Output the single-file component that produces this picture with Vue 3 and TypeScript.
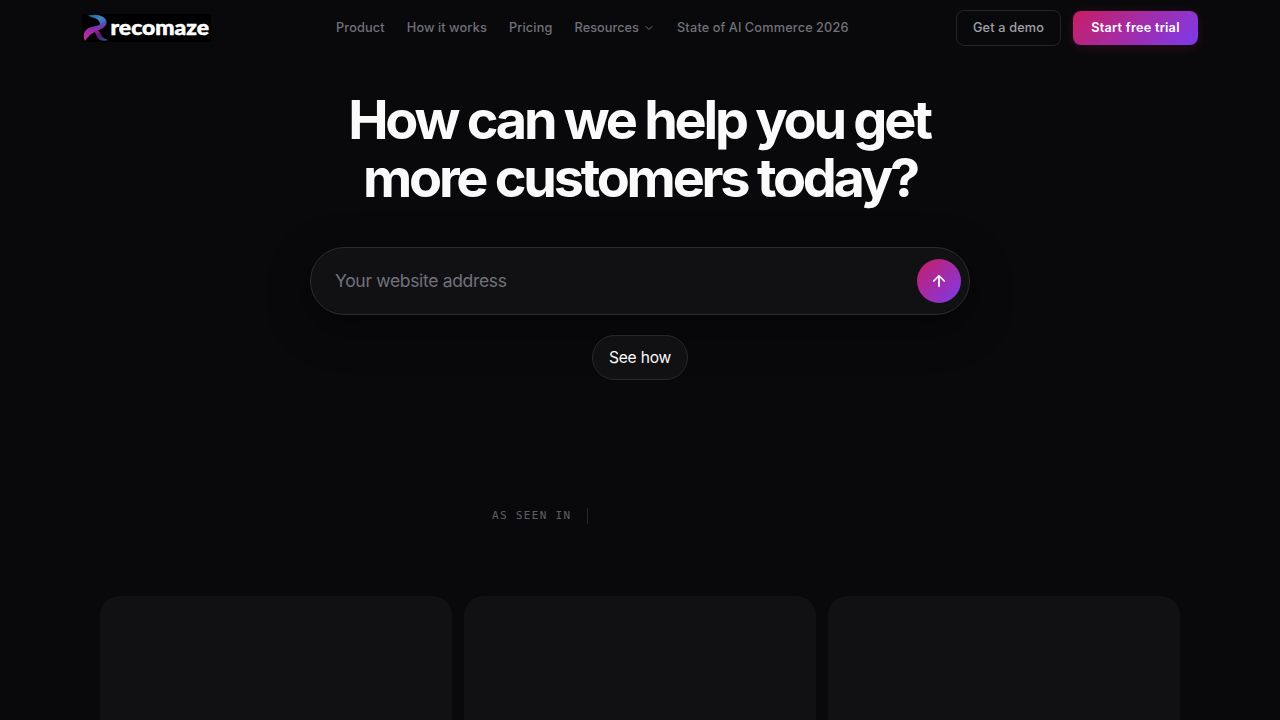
<script setup lang="ts">
interface NavItem {
  label: string
  menu?: boolean
}

const navItems: NavItem[] = [
  { label: 'Product' },
  { label: 'How it works' },
  { label: 'Pricing' },
  { label: 'Resources', menu: true },
  { label: 'State of AI Commerce 2026' },
]
const cards: number[] = [1, 2, 3]
</script>

<template>
  <div class="page">
    <header class="header">
      <a class="logo" aria-label="recomaze">
        <svg width="129" height="28" viewBox="0 0 129 28">
          <defs>
            <linearGradient id="ribbonTop" x1="0" y1="0" x2="1" y2="1">
              <stop offset="0" stop-color="#1d5f88" />
              <stop offset="0.45" stop-color="#3f83c4" />
              <stop offset="1" stop-color="#5a3aa8" />
            </linearGradient>
            <linearGradient id="ribbonLow" x1="1" y1="0" x2="0" y2="1">
              <stop offset="0" stop-color="#4a55b8" />
              <stop offset="0.5" stop-color="#8f2aa6" />
              <stop offset="1" stop-color="#c22f9c" />
            </linearGradient>
            <linearGradient id="ribbonLeg" x1="0" y1="0" x2="1" y2="1">
              <stop offset="0" stop-color="#a01f8c" />
              <stop offset="0.5" stop-color="#4d2170" />
              <stop offset="1" stop-color="#23708f" />
            </linearGradient>
          </defs>
          <rect width="129" height="28" fill="#000" />
          <path d="M6 1.5C12 0 20 0.5 23.5 5C26.5 10 21 14 15 16.5C18.5 12 19 8.5 15.5 5.5C12.5 3.5 9 3.8 6 1.5Z" fill="url(#ribbonTop)" />
          <path d="M24 6C26.5 12.5 19 15 14 17.5C8 20 6 23 3 27C0.5 22 1.5 16 8 13.5C15 11.5 21 11 24 6Z" fill="url(#ribbonLow)" />
          <path d="M12 17.5C16.5 15.5 18 17.5 19 20.5C20 23.5 23 25 26.5 26C21.5 27.8 16.5 26.5 15 23C14 20.5 14 19.5 12 17.5Z" fill="url(#ribbonLeg)" />
          <text x="28.5" y="20.6" textLength="98.5" lengthAdjust="spacingAndGlyphs">recomaze</text>
        </svg>
      </a>
      <nav class="nav">
        <a v-for="item in navItems" :key="item.label" class="nav-link">
          {{ item.label }}
          <svg v-if="item.menu" class="chevron" width="12" height="12" viewBox="0 0 24 24">
            <path d="m6 9 6 6 6-6" />
          </svg>
        </a>
      </nav>
      <div class="actions">
        <button class="demo">Get a demo</button>
        <button class="trial">Start free trial</button>
      </div>
    </header>

    <main>
      <h1>How can we help you get<br />more customers today?</h1>
      <form class="search" @submit.prevent>
        <input type="text" placeholder="Your website address" />
        <button class="send" aria-label="Submit">
          <svg width="18" height="18" viewBox="0 0 24 24">
            <path d="M12 19V5M5 12l7-7 7 7" />
          </svg>
        </button>
      </form>
      <button class="see">See how</button>
      <div class="seen"><span>AS SEEN IN</span><i class="rule"></i></div>
      <section class="cards">
        <div v-for="card in cards" :key="card" class="card"></div>
      </section>
    </main>
  </div>
</template>

<style>
body {
  background: #09090b;
  overflow: hidden;
}
</style>

<style scoped>
.page {
  height: 720px;
  overflow: hidden;
  background: #09090b;
  color: #fafafa;
  font-family: Inter, 'Liberation Sans', sans-serif;
}
button {
  font-family: inherit;
  padding: 0 0 2px;
  box-sizing: border-box;
}
.header {
  height: 56px;
  padding: 0 82px;
  display: grid;
  grid-template-columns: 254px 1fr auto;
  align-items: center;
}
.logo svg {
  display: block;
}
.logo text {
  font: 900 20px Lato, sans-serif;
  fill: #fff;
  stroke: #fff;
  stroke-width: 0.5;
}
.nav {
  display: flex;
  gap: 22px;
}
.nav-link {
  display: flex;
  align-items: center;
  gap: 4px;
  font-size: 12.7px;
  line-height: 20px;
  font-weight: 500;
  letter-spacing: 0.18px;
  word-spacing: -0.4px;
  color: #71717a;
  white-space: nowrap;
}
.nav-link:nth-child(4) {
  letter-spacing: 0.05px;
}
.nav-link:nth-child(5) {
  letter-spacing: 0.21px;
}
.chevron {
  fill: none;
  stroke: currentColor;
  stroke-width: 2;
  stroke-linecap: round;
  stroke-linejoin: round;
}
.actions {
  display: flex;
  align-items: center;
  gap: 12px;
}
.demo {
  width: 105px;
  height: 36px;
  border: 1px solid #252528;
  border-radius: 8px;
  background: transparent;
  color: #a1a1aa;
  font-size: 12.7px;
  font-weight: 500;
  letter-spacing: 0.16px;
}
.trial {
  width: 125px;
  height: 34px;
  border: 0;
  border-radius: 8px;
  background: linear-gradient(135deg, #c81e64, #7c3aed);
  box-shadow: 0 2px 12px rgba(200, 30, 100, 0.2);
  color: #fff;
  font-size: 12.7px;
  font-weight: 600;
  letter-spacing: 0.25px;
}
main {
  display: flex;
  flex-direction: column;
  align-items: center;
}
h1 {
  margin: 35px 0 0;
  font-size: 54px;
  line-height: 58px;
  font-weight: 700;
  letter-spacing: -3.24px;
  text-indent: -2px;
  text-align: center;
  white-space: nowrap;
}
.search {
  width: 660px;
  height: 68px;
  box-sizing: border-box;
  margin-top: 40px;
  padding: 0 8px 0 24px;
  display: flex;
  align-items: center;
  border: 1px solid #2c2c2f;
  border-radius: 34px;
  background: #111113;
  box-shadow: 0 12px 44px rgba(0, 0, 0, 0.45);
}
input {
  flex: 1;
  min-width: 0;
  padding: 0 0 1px;
  border: 0;
  outline: 0;
  background: transparent;
  color: #fafafa;
  font: 400 17.5px Inter, sans-serif;
  letter-spacing: -0.33px;
}
input::placeholder {
  color: #71717a;
}
.send {
  width: 44px;
  height: 44px;
  padding: 0;
  border: 0;
  border-radius: 50%;
  display: flex;
  align-items: center;
  justify-content: center;
  background: linear-gradient(135deg, #c81e64, #7c3aed);
}
.send svg {
  fill: none;
  stroke: #fff;
  stroke-width: 2.3;
  stroke-linecap: round;
  stroke-linejoin: round;
}
.see {
  width: 96px;
  height: 45px;
  margin-top: 20px;
  padding: 0;
  border: 1px solid #29292c;
  border-radius: 23px;
  background: #111113;
  color: #fafafa;
  font-size: 15.6px;
  font-weight: 400;
  letter-spacing: -0.2px;
}
.seen {
  width: 296px;
  height: 16px;
  margin-top: 128px;
  display: flex;
  align-items: center;
  gap: 16px;
  color: #5f5f62;
  font: 400 11px/16px 'DejaVu Sans Mono', monospace;
  letter-spacing: 1.32px;
}
.rule {
  width: 1px;
  height: 16px;
  background: #27272a;
}
.cards {
  width: 1080px;
  margin-top: 72px;
  display: grid;
  grid-template-columns: repeat(3, 1fr);
  gap: 12px;
}
.card {
  height: 240px;
  border-radius: 20px;
  background: #111113;
}
</style>
